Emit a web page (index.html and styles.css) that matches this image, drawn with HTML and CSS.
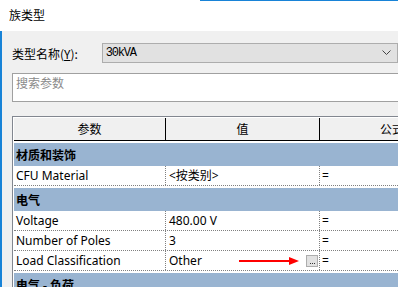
FILE: index.html
```html
<!doctype html>
<html lang="zh-CN">
    <head>
        <meta charset="UTF-8" />
        <title>族类型</title>
        <link rel="stylesheet" href="styles.css">
    </head>
    <body>
        <div class="titlebar">族类型</div>

        <div class="dialog">
            <div class="name-row">
                <label class="name-label">类型名称(<u>Y</u>):</label>
                <div class="select">
                    <span class="select-value">30kVA</span>
                    <svg class="chevron" width="9" height="6" viewBox="0 0 9 6">
                        <path d="M0.5 0.5 L4.5 4.5 L8.5 0.5" fill="none" stroke="#444" stroke-width="1" />
                    </svg>
                </div>
            </div>

            <div class="search">搜索参数</div>

            <div class="grid">
                <div class="head">
                    <div class="hcell">参数</div>
                    <div class="hcell">值</div>
                    <div class="hcell hcell-last">公式</div>
                </div>

                <div class="group">材质和装饰</div>
                <div class="row">
                    <div class="cell">CFU Material</div>
                    <div class="cell cell-value">&lt;按类别&gt;</div>
                    <div class="cell cell-formula">=</div>
                </div>

                <div class="group">电气</div>
                <div class="row">
                    <div class="cell">Voltage</div>
                    <div class="cell cell-value">480.00 V</div>
                    <div class="cell cell-formula">=</div>
                </div>
                <div class="row">
                    <div class="cell">Number of Poles</div>
                    <div class="cell cell-value">3</div>
                    <div class="cell cell-formula">=</div>
                </div>
                <div class="row">
                    <div class="cell">Load Classification</div>
                    <div class="cell cell-value">
                        <span>Other</span>
                        <svg class="arrow" width="60" height="8" viewBox="0 0 60 8">
                            <line x1="0" y1="4" x2="52" y2="4" stroke="#f00" stroke-width="2" />
                            <polygon points="50,0 60,4 50,8" fill="#f00" />
                        </svg>
                        <span class="dots"><i></i><i></i><i></i></span>
                    </div>
                    <div class="cell cell-formula">=</div>
                </div>

                <div class="group">电气 - 负荷</div>
            </div>
        </div>
    </body>
</html>
```

FILE: styles.css
```css
body {
    margin: 0;
    width: 398px;
    height: 287px;
    overflow: hidden;
    background-color: #f0f0f0;
    font-family: "Noto Sans", "Noto Sans CJK SC", sans-serif;
    font-size: 12px;
    color: #000;
}
.titlebar {
    height: 31px;
    line-height: 30px;
    padding-left: 9px;
    background-color: #fff;
    font-family: "Noto Sans CJK SC", sans-serif;
    position: relative;
}
/* кусок синей рамки окна сверху */
.titlebar::after {
    content: "";
    position: absolute;
    top: 0;
    left: 200px;
    right: 0;
    height: 1px;
    background-color: #1883d7;
}
.dialog {
    border-left: 2px solid #1883d7;
    padding: 12px 0 0 10px;
    height: 300px;
    overflow: hidden;
}
.name-row {
    display: flex;
    align-items: center;
    height: 20px;
}
.name-label {
    width: 91px;
    font-family: "Noto Sans CJK SC", sans-serif;
    font-size: 12px;
}
.select {
    width: 290px;
    height: 18px;
    border: 1px solid #adadad;
    background-color: #e1e1e1;
    display: flex;
    align-items: center;
    justify-content: space-between;
    padding: 0 5px 0 3px;
    box-sizing: content-box;
}
.select-value {
    font-family: "Liberation Mono", monospace;
    font-size: 12px;
    letter-spacing: -1.2px;
}
.chevron {
    margin-right: 1px;
}
.search {
    margin-top: 10px;
    width: 400px;
    height: 27px;
    border: 1px solid #a0a0a0;
    background-color: #fff;
    color: #8a8a8a;
    font-family: "Noto Sans CJK SC", sans-serif;
    padding: 0 3px;
    line-height: 17px;
}
.grid {
    margin-top: 14px;
    width: 420px;
    border: 1px solid #828790;
    padding: 1px;
    background-color: #fff;
}
.head {
    display: grid;
    grid-template-columns: 152px 154px 1fr;
    height: 22px;
    border-bottom: 1px solid #000;
    background-color: #f0f0f0;
}
.hcell {
    border-right: 1px solid #000;
    text-align: center;
    line-height: 22px;
    font-family: "Noto Sans CJK SC", sans-serif;
    white-space: nowrap;
}
.hcell-last {
    border-right: none;
    text-align: left;
    padding-left: 60px;
}
.group {
    margin-top: 2px;
    height: 23px;
    line-height: 23px;
    background-color: #99b4d1;
    padding-left: 2px;
    font-weight: bold;
    font-family: "Noto Sans CJK SC", sans-serif;
}
.row {
    display: grid;
    grid-template-columns: 152px 154px 1fr;
    height: 19px;
    border-bottom: 1px dotted #808080;
}
.cell {
    border-right: 1px dotted #808080;
    padding-left: 2px;
    line-height: 19px;
    white-space: nowrap;
}
.cell-value {
    padding-left: 3px;
    display: flex;
    align-items: center;
    padding-right: 1px;
}
.cell-formula {
    border-right: none;
}
.arrow {
    margin-left: auto;
    margin-right: 7px;
}
.dots {
    width: 10px;
    height: 10px;
    border: 1px solid #adadad;
    background-color: #e1e1e1;
    display: flex;
    justify-content: center;
    align-items: flex-end;
    gap: 1px;
    padding-bottom: 2px;
    box-sizing: border-box;
    width: 12px;
    height: 12px;
}
.dots i {
    width: 1px;
    height: 1px;
    background-color: #333;
}
```
